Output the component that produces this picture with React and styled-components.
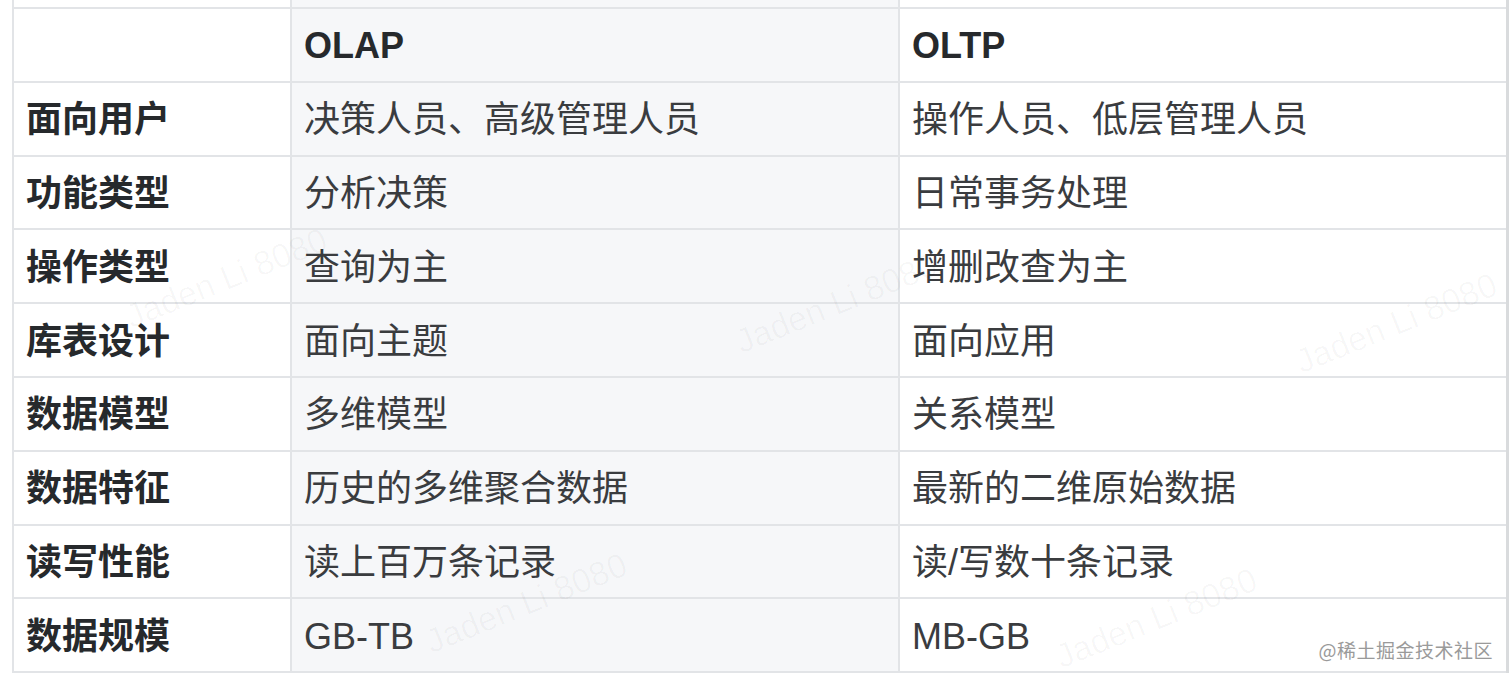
import React from 'react';
import styled, { createGlobalStyle } from 'styled-components';

const GlobalStyle = createGlobalStyle`
  html, body {
    margin: 0;
    padding: 0;
    background: #ffffff;
  }
  body {
    font-family: "Liberation Sans", "Noto Sans CJK SC", sans-serif;
  }
`;

// page frame, clips the table like the screenshot does
const Page = styled.div`
  position: relative;
  width: 1512px;
  height: 682px;
  overflow: hidden;
  background: #ffffff;
  padding-left: 12px;
  box-sizing: border-box;
`;

const Table = styled.table`
  border-collapse: collapse;
  table-layout: fixed;
  width: 1494px;
  color: #333333;
`;

const Col = styled.col`
  width: ${(p) => p.w}px;
`;

const Tr = styled.tr`
  height: ${(p) => (p.cut ? 8 : 73.8)}px;
`;

// one cell; the middle (OLAP) column has the grey fill
const Td = styled.td`
  border: 2px solid #e2e4e7;
  border-top: ${(p) => (p.cut ? 'none' : '2px solid #e2e4e7')};
  padding: 3px 0 0 12px;
  background: ${(p) => (p.shade ? '#f6f7f9' : '#ffffff')};
  font-size: 36px;
  line-height: 40px;
  font-weight: ${(p) => (p.bold ? 700 : 400)};
  color: ${(p) => (p.bold ? '#26292c' : '#3a3c3f')};
  white-space: nowrap;
  vertical-align: middle;

  &:last-child {
    border-right: 3px solid #d9dbdd;
  }
`;

// faint "Jaden Li 8080" stamps over the table
const Stamp = styled.div`
  position: absolute;
  left: ${(p) => p.x}px;
  top: ${(p) => p.y}px;
  transform: rotate(-22deg);
  transform-origin: left top;
  font-family: "Liberation Sans", sans-serif;
  font-size: 34px;
  color: rgba(0, 0, 0, 0.03);
  white-space: nowrap;
  pointer-events: none;
`;

const Source = styled.div`
  position: absolute;
  right: 19px;
  top: 638px;
  font-family: "Noto Sans CJK SC", sans-serif;
  font-size: 19px;
  line-height: 24px;
  color: #9a9a9a;
  letter-spacing: 0.5px;
`;

const rows = [
  ['面向用户', '决策人员、高级管理人员', '操作人员、低层管理人员'],
  ['功能类型', '分析决策', '日常事务处理'],
  ['操作类型', '查询为主', '增删改查为主'],
  ['库表设计', '面向主题', '面向应用'],
  ['数据模型', '多维模型', '关系模型'],
  ['数据特征', '历史的多维聚合数据', '最新的二维原始数据'],
  ['读写性能', '读上百万条记录', '读/写数十条记录'],
  ['数据规模', 'GB-TB', 'MB-GB'],
];

const stamps = [
  { x: 120, y: 300 },
  { x: 730, y: 325 },
  { x: 1290, y: 345 },
  { x: 420, y: 625 },
  { x: 1050, y: 640 },
];

export default function App() {
  return (
    <>
      <GlobalStyle />
      <Page>
        <Table>
          <colgroup>
            <Col w={278} />
            <Col w={608} />
            <Col w={608} />
          </colgroup>
          <tbody>
            <Tr cut>
              <Td cut />
              <Td cut shade />
              <Td cut />
            </Tr>
            <Tr>
              <Td />
              <Td shade bold>OLAP</Td>
              <Td bold>OLTP</Td>
            </Tr>
            {rows.map((r) => (
              <Tr key={r[0]}>
                <Td bold>{r[0]}</Td>
                <Td shade>{r[1]}</Td>
                <Td>{r[2]}</Td>
              </Tr>
            ))}
          </tbody>
        </Table>

        {stamps.map((s, i) => (
          <Stamp key={i} x={s.x} y={s.y}>Jaden Li 8080</Stamp>
        ))}
        <Source>@稀土掘金技术社区</Source>
      </Page>
    </>
  );
}
